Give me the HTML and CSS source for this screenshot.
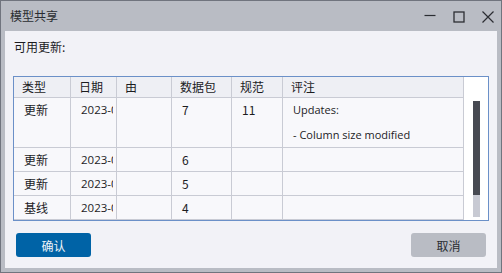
FILE: index.html
```html
<!DOCTYPE html>
<html lang="zh">
<head>
<meta charset="utf-8">
<link rel="stylesheet" href="styles.css">
</head>
<body>
<div class="window">
  <div class="titlebar">
    <span class="title">模型共享</span>
    <div class="controls">
      <svg class="ctl" width="12" height="12" viewBox="0 0 12 12"><path d="M0.5 4.5H11.5" stroke="#2b2d33" stroke-width="1.2" fill="none"/></svg>
      <svg class="ctl" width="12" height="12" viewBox="0 0 12 12"><rect x="1" y="1" width="10" height="10" stroke="#2b2d33" stroke-width="1.3" fill="none"/></svg>
      <svg class="ctl" width="12" height="12" viewBox="0 0 12 12"><path d="M0.5 0.5L11.5 11.5M11.5 0.5L0.5 11.5" stroke="#2b2d33" stroke-width="1.2" fill="none"/></svg>
    </div>
  </div>
  <div class="content">
    <div class="label">可用更新:</div>
    <div class="table">
      <div class="grid">
        <div class="cell head">类型</div>
        <div class="cell head">日期</div>
        <div class="cell head">由</div>
        <div class="cell head">数据包</div>
        <div class="cell head">规范</div>
        <div class="cell head">评注</div>

        <div class="cell tall">更新</div>
        <div class="cell tall"><div class="clip">2023-06-12</div></div>
        <div class="cell tall"></div>
        <div class="cell tall">7</div>
        <div class="cell tall">11</div>
        <div class="cell tall latin"><div>Updates:</div><div class="gapline">- Column size modified</div></div>

        <div class="cell">更新</div>
        <div class="cell"><div class="clip">2023-06-05</div></div>
        <div class="cell"></div>
        <div class="cell">6</div>
        <div class="cell"></div>
        <div class="cell"></div>

        <div class="cell">更新</div>
        <div class="cell"><div class="clip">2023-05-28</div></div>
        <div class="cell"></div>
        <div class="cell">5</div>
        <div class="cell"></div>
        <div class="cell"></div>

        <div class="cell">基线</div>
        <div class="cell"><div class="clip">2023-05-20</div></div>
        <div class="cell"></div>
        <div class="cell">4</div>
        <div class="cell"></div>
        <div class="cell"></div>
      </div>
      <div class="scrollcol">
        <div class="track"><div class="thumb"></div></div>
      </div>
    </div>
    <div class="buttons">
      <button class="btn primary">确认</button>
      <button class="btn secondary">取消</button>
    </div>
  </div>
</div>
</body>
</html>
```
FILE: styles.css
```css
* { box-sizing: border-box; }
html, body { margin: 0; padding: 0; }
body {
  font-family: "Noto Sans CJK SC", "Noto Sans", sans-serif;
  font-size: 12px;
  color: #1c1c1f;
  background: #b9bcc4;
}
.window {
  width: 502px;
  height: 273px;
  border: 1px solid #70747e;
  background: #b9bcc4;
  display: flex;
  flex-direction: column;
  padding: 0 4px 4px 4px;
}
.titlebar {
  height: 30px;
  display: flex;
  align-items: center;
  justify-content: space-between;
  padding-left: 5px;
}
.title {
  font-size: 12px;
  color: #2a2c31;
  line-height: 14px;
  margin-top: -1px;
}
.controls {
  display: flex;
  gap: 17px;
  margin-right: 3px;
  margin-top: 1px;
}
.ctl { display: block; }
.content {
  flex: 1;
  background: #f2f2f7;
  display: flex;
  flex-direction: column;
  padding: 9px 0 0 8px;
}
.label {
  font-size: 12px;
  line-height: 14px;
  margin-left: 1px;
}
.table {
  margin-top: 22px;
  width: 476px;
  height: 145px;
  border: 1px solid #6b90c8;
  display: flex;
  background: #ffffff;
}
.grid {
  display: grid;
  grid-template-columns: 57px 46px 55px 60px 51px 181px;
  grid-template-rows: 21px 50px 24px 24px 24px;
  align-content: start;
}
.cell {
  background: #f8f8fb;
  border-right: 1px solid #c9cbd4;
  border-bottom: 1px solid #c9cbd4;
  padding: 5px 0 0 10px;
  line-height: 14px;
  font-size: 12px;
  overflow: hidden;
  white-space: nowrap;
}
.cell.head {
  background: #eeeff4;
  padding-top: 3px;
  padding-left: 8px;
}
.cell.tall { padding-top: 5px; }
.latin {
  font-family: "Open Sans", "Noto Sans", sans-serif;
  font-size: 11px;
  padding-left: 10px;
}
.gapline { margin-top: 11px; }
.clip {
  width: 32px;
  overflow: hidden;
  white-space: nowrap;
  font-family: "Open Sans", "Noto Sans", sans-serif;
  font-size: 11.5px;
}
.scrollcol {
  width: 24px;
  background: #ffffff;
  padding: 24px 0 0 9px;
}
.track {
  width: 7px;
  height: 116px;
  background: #c8cad3;
}
.thumb {
  width: 7px;
  height: 94px;
  background: #474a52;
}
.buttons {
  margin-top: 12px;
  display: flex;
  justify-content: space-between;
  padding: 0 11px 0 3px;
}
.btn {
  width: 75px;
  height: 24px;
  border: none;
  border-radius: 3px;
  font-family: "Noto Sans CJK SC", sans-serif;
  font-size: 12px;
  padding: 0;
}
.primary { background: #0063a6; color: #eef3f8; }
.secondary { background: #b9bcc4; color: #2a2c31; }
```
